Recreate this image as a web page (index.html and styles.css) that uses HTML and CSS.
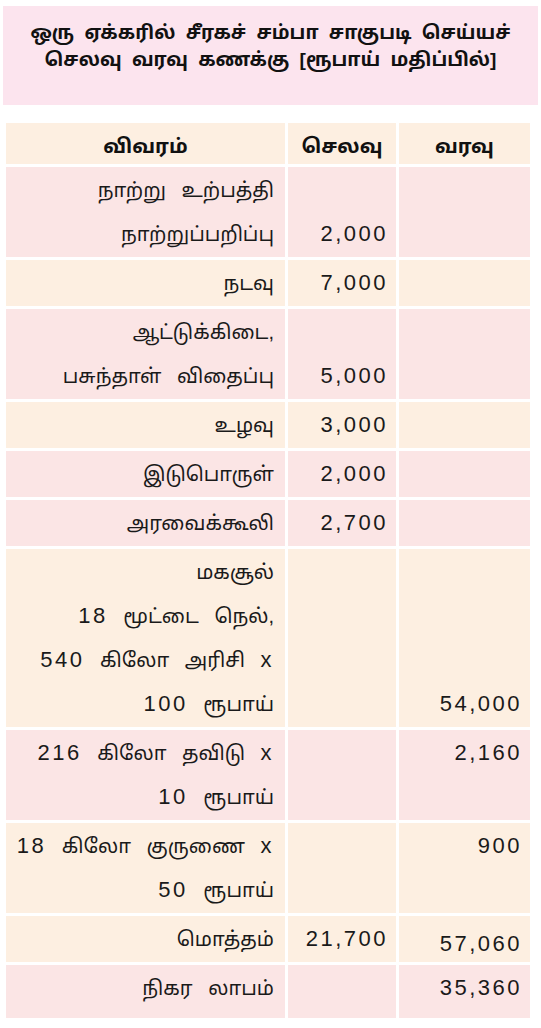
FILE: index.html
```html
<!DOCTYPE html>
<html lang="ta">
<head>
<meta charset="utf-8">
<title>செலவு வரவு கணக்கு</title>
<link rel="stylesheet" href="styles.css">
</head>
<body>
<div class="title-box">
  <h1 class="title">ஒரு ஏக்கரில் சீரகச் சம்பா சாகுபடி செய்யச்<br>செலவு வரவு கணக்கு [ரூபாய் மதிப்பில்]</h1>
</div>
<table class="ledger">
  <colgroup>
    <col class="c-desc">
    <col class="c-exp">
    <col class="c-inc">
  </colgroup>
  <thead>
    <tr class="cream">
      <th>விவரம்</th>
      <th>செலவு</th>
      <th>வரவு</th>
    </tr>
  </thead>
  <tbody>
    <tr class="pink">
      <td>நாற்று உற்பத்தி<br>நாற்றுப்பறிப்பு</td>
      <td class="num bottom">2,000</td>
      <td class="num"></td>
    </tr>
    <tr class="cream">
      <td>நடவு</td>
      <td class="num">7,000</td>
      <td class="num"></td>
    </tr>
    <tr class="pink">
      <td>ஆட்டுக்கிடை,<br>பசுந்தாள் விதைப்பு</td>
      <td class="num bottom">5,000</td>
      <td class="num"></td>
    </tr>
    <tr class="cream">
      <td>உழவு</td>
      <td class="num">3,000</td>
      <td class="num"></td>
    </tr>
    <tr class="pink">
      <td>இடுபொருள்</td>
      <td class="num">2,000</td>
      <td class="num"></td>
    </tr>
    <tr class="pink">
      <td>அரவைக்கூலி</td>
      <td class="num">2,700</td>
      <td class="num"></td>
    </tr>
    <tr class="cream">
      <td>மகசூல்<br><span class="d">18</span> மூட்டை நெல்,<br><span class="d">540</span> கிலோ அரிசி <span class="d">x</span><br><span class="d">100</span> ரூபாய்</td>
      <td class="num"></td>
      <td class="num bottom">54,000</td>
    </tr>
    <tr class="pink">
      <td><span class="d">216</span> கிலோ தவிடு <span class="d">x</span><br><span class="d">10</span> ரூபாய்</td>
      <td class="num"></td>
      <td class="num top">2,160</td>
    </tr>
    <tr class="cream">
      <td><span class="d">18</span> கிலோ குருணை <span class="d">x</span><br><span class="d">50</span> ரூபாய்</td>
      <td class="num"></td>
      <td class="num top">900</td>
    </tr>
    <tr class="cream">
      <td>மொத்தம்</td>
      <td class="num">21,700</td>
      <td class="num low">57,060</td>
    </tr>
    <tr class="pink last">
      <td>நிகர லாபம்</td>
      <td class="num"></td>
      <td class="num top">35,360</td>
    </tr>
  </tbody>
</table>
</body>
</html>
```

FILE: styles.css
```css
html, body {
  margin: 0;
  padding: 0;
  background: #ffffff;
}

body {
  padding: 6px 3px 0 3px;
  font-family: "Liberation Sans", "Noto Sans Tamil", "Lohit Tamil", "Noto Sans", sans-serif;
  color: #1a1a1a;
}

.title-box {
  width: 535px;
  height: 99px;
  box-sizing: border-box;
  background: #fce4ee;
  padding-top: 13px;
}

.title {
  margin: 0;
  font-size: 19px;
  line-height: 27px;
  font-weight: bold;
  text-align: center;
  word-spacing: 5px;
  white-space: nowrap;
  color: #111111;
}

.ledger {
  margin-top: 15px;
  width: 530px;
  table-layout: fixed;
  border-collapse: separate;
  border-spacing: 3px;
}

.c-desc { width: 279px; }
.c-exp { width: 108px; }
.c-inc { width: 131px; }

.ledger th {
  font-size: 20px;
  font-weight: bold;
  line-height: 36px;
  padding: 5px 0 0 0;
  text-align: center;
  color: #111111;
}

.ledger td {
  font-size: 20px;
  line-height: 44px;
  padding: 1px 11px 1px 0;
  text-align: right;
  vertical-align: middle;
  word-spacing: 10px;
  white-space: nowrap;
}

.ledger td .d {
  font-size: 22px;
  letter-spacing: 2.5px;
  word-spacing: 0;
}

.ledger td.num {
  font-size: 22px;
  letter-spacing: 2.5px;
  padding-right: 8px;
}

.ledger td.bottom { vertical-align: bottom; }
.ledger td.top { vertical-align: top; }
.ledger td.low { vertical-align: top; padding-top: 11px; line-height: 34px; }

.ledger tr.last td { padding-bottom: 8px; }

.cream th, .cream td { background: #fdefe1; }
.pink th, .pink td { background: #fbe5e5; }
```
